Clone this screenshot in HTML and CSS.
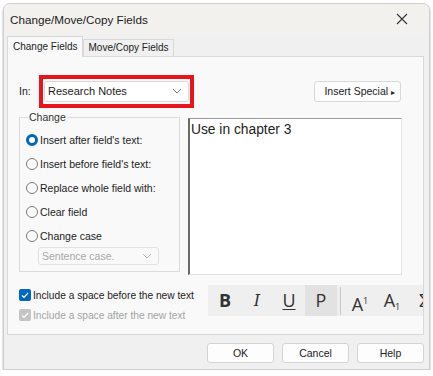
FILE: index.html
```html
<!DOCTYPE html>
<html lang="en">
<head>
  <meta charset="UTF-8" />
  <title>Change/Move/Copy Fields</title>
  <link rel="stylesheet" href="styles.css">
</head>
<body>
  <div class="window">
    <div class="titlebar">
      <span class="title">Change/Move/Copy Fields</span>
      <svg class="close" width="12" height="12" viewBox="0 0 12 12">
        <path d="M1 1 L11 11 M11 1 L1 11" stroke="#333" stroke-width="1.1" fill="none"/>
      </svg>
    </div>

    <div class="tabs">
      <div class="tab active">Change Fields</div>
      <div class="tab">Move/Copy Fields</div>
    </div>

    <div class="panel">
      <div class="top-row">
        <span class="in-label">In:</span>
        <div class="highlight">
          <div class="combo">
            <span>Research Notes</span>
            <svg width="10" height="6" viewBox="0 0 10 6"><path d="M1 1 L5 5 L9 1" stroke="#777" fill="none"/></svg>
          </div>
        </div>
        <button class="special">Insert Special <span class="tri">&#9656;</span></button>
      </div>

      <div class="mid-row">
        <fieldset class="group">
          <legend>Change</legend>
          <label class="radio"><span class="dot checked"></span>Insert after field's text:</label>
          <label class="radio"><span class="dot"></span>Insert before field's text:</label>
          <label class="radio"><span class="dot"></span>Replace whole field with:</label>
          <label class="radio"><span class="dot"></span>Clear field</label>
          <label class="radio"><span class="dot"></span>Change case</label>
          <div class="case-combo">
            <span>Sentence case.</span>
            <svg width="10" height="6" viewBox="0 0 10 6"><path d="M1 1 L5 5 L9 1" stroke="#bbb" fill="none"/></svg>
          </div>
        </fieldset>
        <div class="editor">Use in chapter 3</div>
      </div>

      <div class="bottom-row">
        <div class="checks">
          <label class="check"><span class="box on">
            <svg width="8" height="7" viewBox="0 0 8 7"><path d="M1 3.5 L3 5.5 L7 1" stroke="#fff" stroke-width="1.2" fill="none"/></svg>
          </span>Include a space before the new text</label>
          <label class="check disabled"><span class="box off">
            <svg width="8" height="7" viewBox="0 0 8 7"><path d="M1 3.5 L3 5.5 L7 1" stroke="#fff" stroke-width="1.2" fill="none"/></svg>
          </span>Include a space after the new text</label>
        </div>
        <div class="toolbar">
          <span class="tool bold">B</span>
          <span class="tool ital">I</span>
          <span class="tool under">U</span>
          <span class="tool pressed">P</span>
          <span class="sep"></span>
          <span class="tool">A<sup>1</sup></span>
          <span class="tool">A<sub>1</sub></span>
          <span class="tool">&Sigma;</span>
        </div>
      </div>
    </div>

    <div class="buttons">
      <button class="btn">OK</button>
      <button class="btn">Cancel</button>
      <button class="btn">Help</button>
    </div>
  </div>
</body>
</html>
```

FILE: styles.css
```css
body {
  margin: 0;
  background: #ffffff;
  font-family: 'Liberation Sans', Arial, sans-serif;
  font-size: 10.5px;
  color: #222;
}
.window {
  width: 427px;
  height: 367px;
  margin: 3px 0 0 3px;
  background: #f0f0f0;
  border: 1px solid #cfcfcf;
  border-radius: 7px 7px 0 0;
  box-shadow: 0 2px 2px #9a9a9a;
  box-sizing: border-box;
  overflow: hidden;
}
.titlebar {
  height: 30px;
  background: #f3f1ee;
  display: flex;
  align-items: center;
  justify-content: space-between;
  padding: 0 21px 0 6px;
}
.title {
  font-size: 11.7px;
  color: #1a1a1a;
}
.tabs {
  display: flex;
  align-items: flex-end;
  margin: 3px 0 0 3px;
  height: 19px;
  font-size: 10px;
}
.tab {
  height: 16px;
  padding: 0 4px;
  border: 1px solid #d9d9d9;
  border-bottom: none;
  background: #f0f0f0;
  line-height: 16px;
}
.tab.active {
  height: 20px;
  background: #f9f9f9;
  padding: 0 5px;
  line-height: 20px;
  margin-bottom: -1px;
  position: relative;
}
.panel {
  margin: 0 5px 0 3px;
  height: 279px;
  background: #f9f9f9;
  border: 1px solid #d9d9d9;
  box-sizing: border-box;
  padding: 17px 0 0 11px;
  overflow: hidden;
}
.top-row {
  display: flex;
  align-items: center;
  height: 34px;
}
.in-label {
  width: 20px;
}
.highlight {
  border: 4px solid #e8141b;
  padding: 2px 1px 2px 1px;
}
.combo {
  width: 145px;
  height: 21px;
  box-sizing: border-box;
  background: #fff;
  border: 1px solid #dadada;
  border-radius: 3px;
  display: flex;
  align-items: center;
  justify-content: space-between;
  padding: 0 6px 0 3px;
  font-size: 11px;
}
.special {
  margin-left: 120px;
  width: 87px;
  height: 21px;
  background: #fdfdfd;
  border: 1px solid #d8d8d8;
  border-radius: 3px;
  font-family: inherit;
  font-size: 10.5px;
  color: #222;
  text-align: right;
  padding: 0 5px 0 0;
}
.tri {
  font-size: 8px;
}
.mid-row {
  display: flex;
  align-items: flex-start;
  margin-top: 3px;
}
.group {
  width: 161px;
  height: 161px;
  margin: 0;
  padding: 5px 0 0 6px;
  border: 1px solid #dcdcdc;
  box-sizing: border-box;
}
.group legend {
  padding: 0 1px;
  margin-left: 2px;
  color: #333;
}
.radio {
  display: flex;
  align-items: center;
  height: 24px;
  color: #222;
}
.dot {
  width: 12px;
  height: 12px;
  box-sizing: border-box;
  border: 1px solid #7a7a7a;
  border-radius: 50%;
  background: #fafafa;
  margin-right: 2px;
}
.dot.checked {
  border: 3.5px solid #0067c0;
  background: #fff;
}
.case-combo {
  width: 121px;
  height: 18px;
  box-sizing: border-box;
  margin: -1px 0 0 12px;
  border: 1px solid #e2e2e2;
  border-radius: 3px;
  display: flex;
  align-items: center;
  justify-content: space-between;
  padding: 0 6px 0 3px;
  color: #a8a8a8;
}
.editor {
  margin: 7px 0 0 8px;
  width: 214px;
  height: 157px;
  background: #fff;
  border: 1px solid #e4e4e4;
  border-left: 2px solid #6a6a6a;
  border-top: 1px solid #9a9a9a;
  box-sizing: border-box;
  padding: 3px 0 0 1px;
  font-size: 13.8px;
  color: #222;
}
.bottom-row {
  display: flex;
  margin-top: 10px;
}
.checks {
  flex: none;
  width: 189px;
  font-size: 10.2px;
}
.check {
  display: flex;
  align-items: center;
  height: 20px;
  white-space: nowrap;
}
.check.disabled {
  color: #a4a4a4;
}
.box {
  width: 12px;
  height: 12px;
  border-radius: 2px;
  display: flex;
  align-items: center;
  justify-content: center;
  margin-right: 2px;
}
.box.on {
  background: #0067c0;
}
.box.off {
  background: #c4c4c4;
}
.toolbar {
  flex: none;
  display: flex;
  align-items: center;
  height: 31px;
  width: 225px;
  background: #efefef;
  padding-left: 1px;
  white-space: nowrap;
}
.tool {
  flex: none;
  width: 32px;
  height: 31px;
  line-height: 31px;
  text-align: center;
  font-family: 'Open Sans', sans-serif;
  font-size: 18px;
  color: #333;
}
.tool sup, .tool sub {
  font-size: 9px;
}
.tool sup { vertical-align: 7px; }
.tool sub { vertical-align: -3px; }
.bold { font-weight: 700; }
.ital { font-style: italic; font-family: 'DejaVu Serif', serif; font-size: 16px; }
.under { text-decoration: underline; text-underline-offset: 2px; }
.pressed { background: #e2e2e2; }
.sep {
  flex: none;
  width: 1px;
  height: 28px;
  background: #c8c8c8;
  margin: 0 3px 0 3px;
}
.buttons {
  display: flex;
  justify-content: flex-end;
  gap: 8px;
  padding: 8px 5px 0 0;
}
.btn {
  width: 67px;
  height: 20px;
  background: #fdfdfd;
  border: 1px solid #d4d4d4;
  border-radius: 3px;
  font-family: inherit;
  font-size: 10.5px;
  color: #222;
}
```
